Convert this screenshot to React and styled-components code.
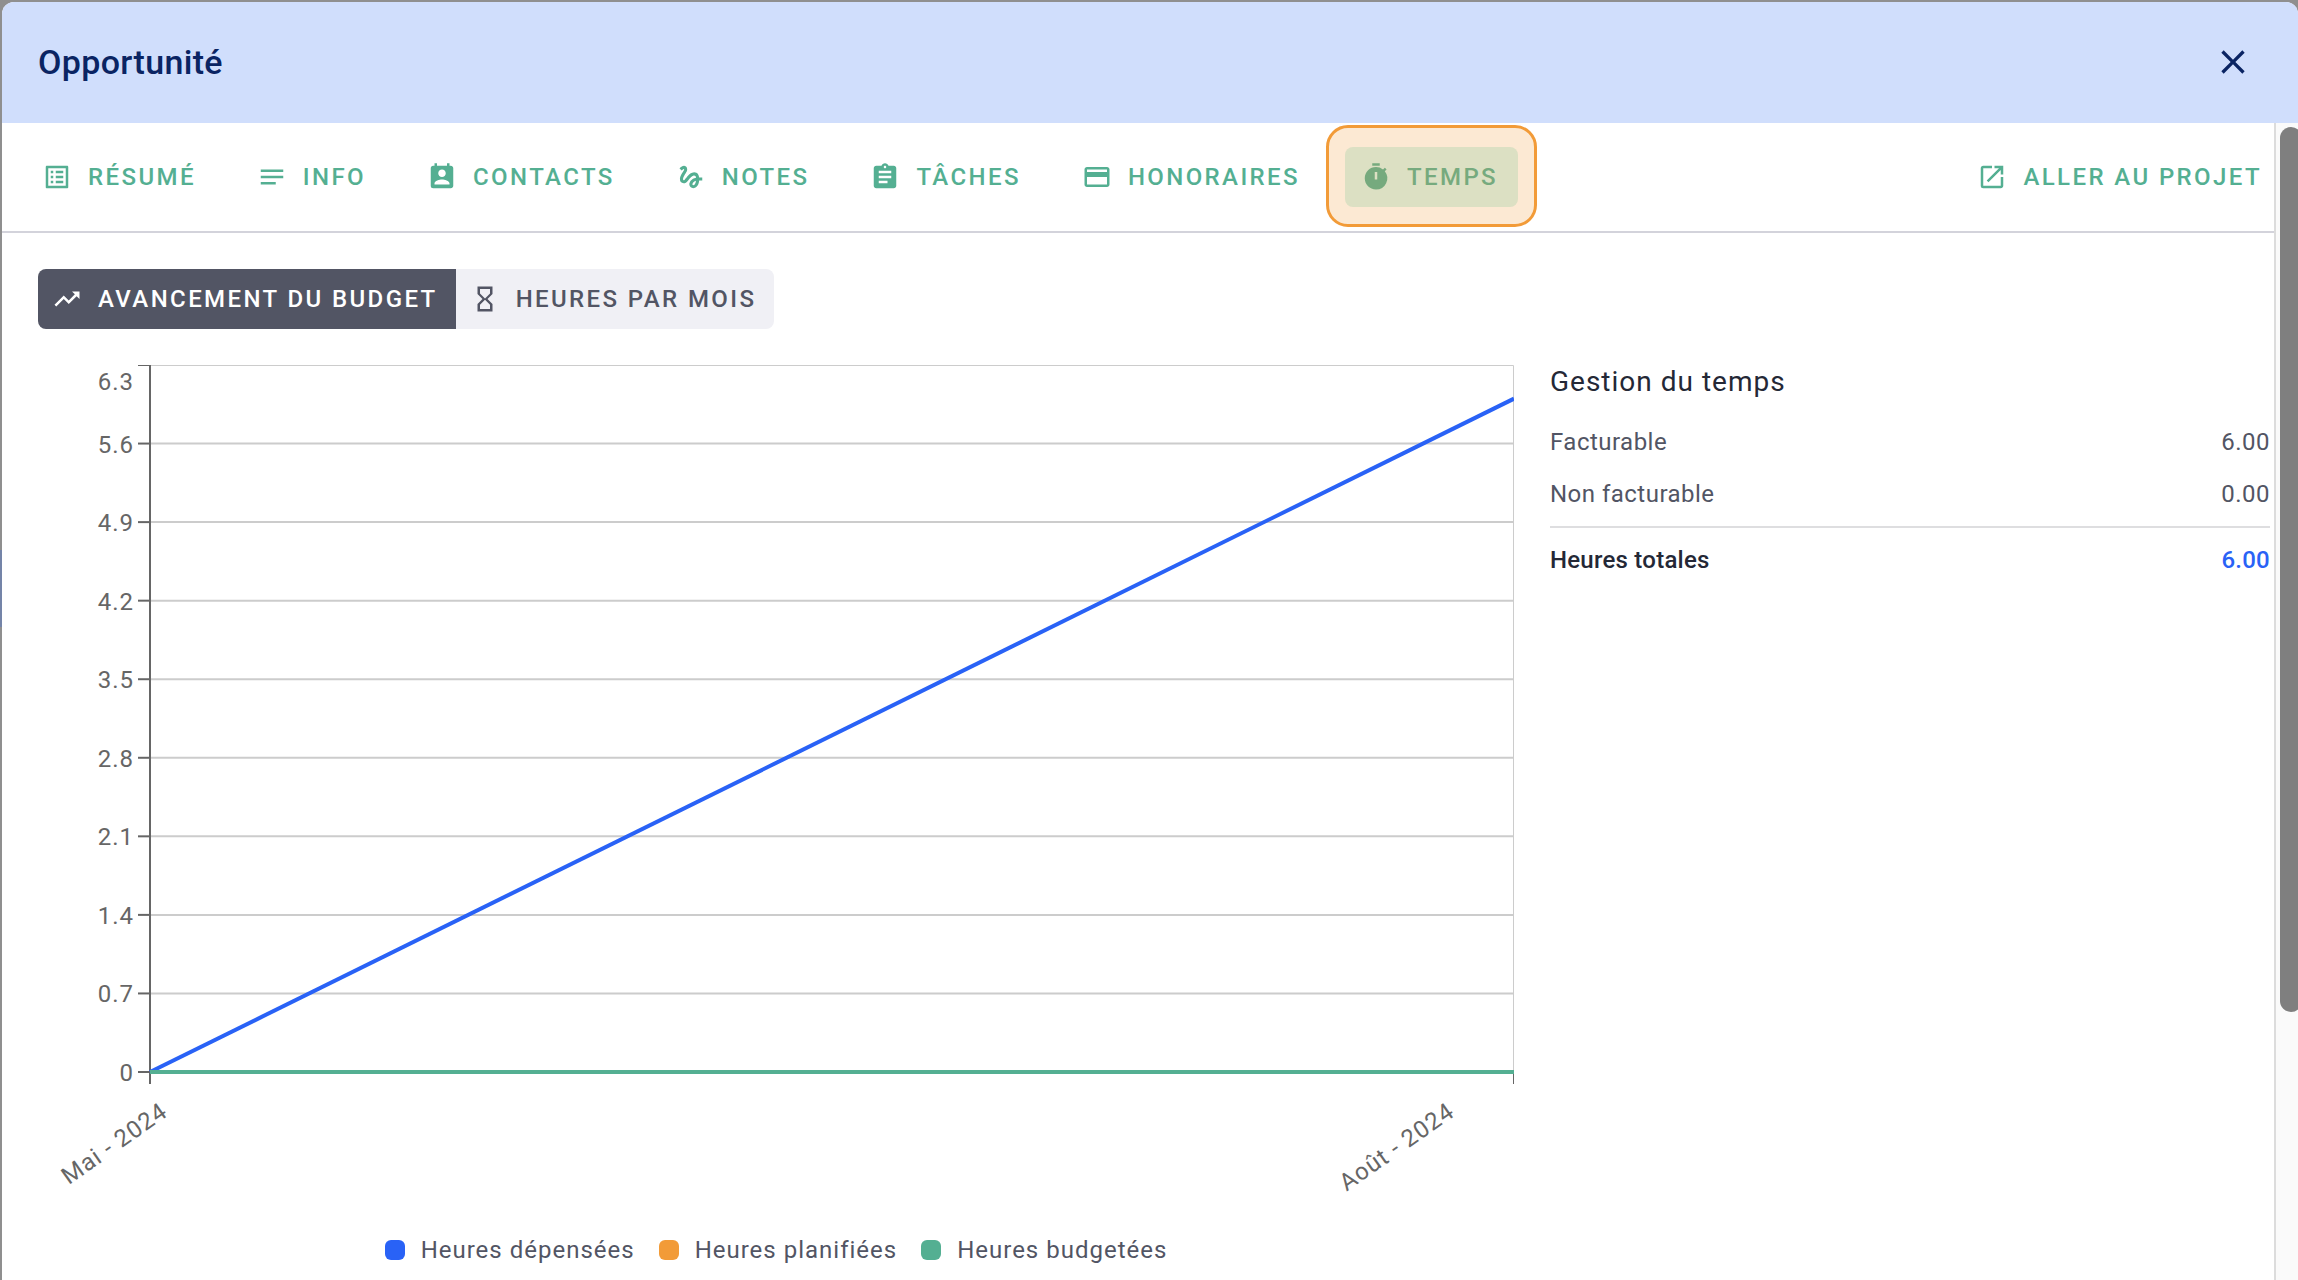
import React, { useState } from "react";
import styled, { createGlobalStyle } from "styled-components";
import {
  MdAssignment,
  MdClose,
  MdGesture,
  MdHourglassEmpty,
  MdListAlt,
  MdNotes,
  MdOpenInNew,
  MdPayment,
  MdPermContactCalendar,
  MdTimer,
  MdTrendingUp,
} from "react-icons/md";

const GlobalStyle = createGlobalStyle`
  :root {
    --colors-primary: #2962f6;
    --colors-green: #54af92;
    --colors-orange: #f29b38;
    --colors-slate: #525564;
    --colors-ink: #242836;
    --colors-navy: #0a2463;
    --colors-axis: #666;
    --colors-grid: #ccc;
    --fs-md: 24px;
    --fs-lg: 28px;
    --fs-xl: 34px;
  }

  * {
    box-sizing: border-box;
  }

  body {
    margin: 0;
    overflow: hidden;
    font-family: Roboto, "Liberation Sans", sans-serif;
    font-size: var(--fs-md);
    color: var(--colors-slate);
  }
`;

const Backdrop = styled.div`
  height: 100vh;
  padding: 2px 0 0 2px;
  background: linear-gradient(
    #8f8f8f 43%,
    #7484a8 43%,
    #7484a8 49%,
    #8f8f8f 49%
  );
`;

const Dialog = styled.section`
  display: flex;
  flex-direction: column;
  height: 100%;
  border-radius: 12px 12px 0 0;
  background-color: #fff;
  overflow: hidden;
`;

const Header = styled.header`
  display: flex;
  flex: none;
  align-items: center;
  justify-content: space-between;
  height: 121px;
  padding: 0 45px 2px 36px;
  background-color: #d0defc;
  color: var(--colors-navy);
`;

const Title = styled.h1`
  margin: 0;
  font-size: var(--fs-xl);
  font-weight: 500;
  letter-spacing: 0.01em;
`;

const CloseButton = styled.button`
  display: flex;
  padding: 0;
  border: 0;
  background: none;
  color: inherit;
  cursor: pointer;
`;

const Scroller = styled.div`
  display: flex;
  flex: 1;
  min-height: 0;
`;

const Content = styled.div`
  flex: 1;
  min-width: 0;
`;

const ScrollTrack = styled.div`
  flex: none;
  width: 24px;
  padding: 4px 0 0 4px;
  border-left: 2px solid #dcdcdc;
  background-color: #fafafa;
  overflow: hidden;
`;

const ScrollThumb = styled.div`
  width: 22px;
  height: 885px;
  border-radius: 11px;
  background-color: #7f7f7f;
`;

const TabBar = styled.nav`
  display: flex;
  align-items: center;
  gap: 25px;
  height: 110px;
  padding-left: 24px;
  border-bottom: 2px solid #d3d3db;
`;

const Tab = styled.button`
  position: relative;
  display: flex;
  align-items: center;
  gap: 16px;
  height: 60px;
  padding: 0 20px 0 16px;
  border: 0;
  border-radius: 8px;
  background-color: ${({ $active }) => ($active ? "#d7f4eb" : "transparent")};
  color: var(--colors-green);
  font: inherit;
  font-weight: 500;
  letter-spacing: 0.1em;
  text-transform: uppercase;
  text-decoration: none;
  white-space: nowrap;
  cursor: pointer;

  ${({ $active }) =>
    $active &&
    `
    &::after {
      content: "";
      position: absolute;
      inset: -22px -19px -20px;
      border: 3px solid #f29b38;
      border-radius: 22px;
      background-color: rgba(242, 155, 56, 0.22);
    }
  `}
`;

const ProjectLink = styled(Tab)`
  margin-left: auto;
  padding-right: 12px;
`;

const Body = styled.main`
  padding: 36px 4px 0 36px;
`;

const ToggleGroup = styled.div`
  display: inline-flex;
  border-radius: 8px;
  overflow: hidden;
`;

const Toggle = styled.button`
  display: flex;
  align-items: center;
  gap: 16px;
  height: 60px;
  padding: 0 18px 0 14px;
  border: 0;
  background-color: ${({ $active }) =>
    $active ? "var(--colors-slate)" : "#f0f0f5"};
  color: ${({ $active }) => ($active ? "#fff" : "var(--colors-slate)")};
  font: inherit;
  font-weight: 500;
  letter-spacing: 0.1em;
  text-transform: uppercase;
  white-space: nowrap;
  cursor: pointer;
`;

const Columns = styled.div`
  display: grid;
  grid-template-columns: 41fr 20fr;
  gap: 36px;
  padding-top: 32px;
`;

const ChartSvg = styled.svg`
  display: block;
  width: 100%;
  height: auto;
`;

const AxisText = styled.text`
  fill: var(--colors-axis);
  font-size: var(--fs-md);
  letter-spacing: 1px;
  text-anchor: end;
`;

const Legend = styled.ul`
  display: flex;
  justify-content: center;
  gap: 24px;
  margin: 0;
  padding: 0;
  list-style: none;
`;

const LegendItem = styled.li`
  display: flex;
  align-items: center;
  gap: 16px;
  line-height: 28px;
  letter-spacing: 1px;

  &::before {
    content: "";
    width: 20px;
    height: 20px;
    border-radius: 6px;
    background-color: ${({ $color }) => $color};
  }
`;

const Summary = styled.aside`
  padding-top: 5px;
`;

const SummaryTitle = styled.h2`
  margin: 0 0 18px;
  color: var(--colors-ink);
  font-size: var(--fs-lg);
  font-weight: 400;
  line-height: 32px;
  letter-spacing: 1px;
`;

const SummaryTable = styled.table`
  width: 100%;
  border-collapse: collapse;
  line-height: 28px;
  letter-spacing: 0.02em;

  th,
  td {
    padding: 12px 0;
    font-weight: 400;
    text-align: left;
  }

  td {
    text-align: right;
  }

  tbody tr:last-child > * {
    padding-bottom: 18px;
  }

  tfoot th,
  tfoot td {
    padding-top: 18px;
    border-top: 2px solid #dedee0;
    color: var(--colors-ink);
    font-weight: 500;
    letter-spacing: 0.01em;
  }

  tfoot td {
    color: var(--colors-primary);
  }
`;

const tabs = [
  { title: "Résumé", Icon: MdListAlt },
  { title: "Info", Icon: MdNotes },
  { title: "Contacts", Icon: MdPermContactCalendar },
  { title: "Notes", Icon: MdGesture },
  { title: "Tâches", Icon: MdAssignment },
  { title: "Honoraires", Icon: MdPayment },
  { title: "Temps", Icon: MdTimer },
];

const views = [
  { title: "Avancement du budget", Icon: MdTrendingUp },
  { title: "Heures par mois", Icon: MdHourglassEmpty },
];

const series = [
  { title: "Heures dépensées", color: "var(--colors-primary)", values: [0, 6] },
  { title: "Heures planifiées", color: "var(--colors-orange)", values: [0, 0] },
  { title: "Heures budgetées", color: "var(--colors-green)", values: [0, 0] },
];

const ticks = ["0", "0.7", "1.4", "2.1", "2.8", "3.5", "4.2", "4.9", "5.6", "6.3"];

const LEFT = 112;
const RIGHT = 1475;
const TOP = 4;
const BOTTOM = 711;

const scaleY = value => BOTTOM - (value / 6.3) * (BOTTOM - TOP);

const BudgetChart = () => (
  <ChartSvg viewBox="0 0 1476 875" role="img" aria-label="Avancement du budget">
    <g stroke="var(--colors-grid)" strokeWidth="2">
      {ticks.slice(1, -1).map(tick => (
        <line key={tick} x1={LEFT} x2={RIGHT} y1={scaleY(tick)} y2={scaleY(tick)} />
      ))}
      <path
        d={`M${LEFT} ${TOP + 0.5}H${RIGHT + 0.5}V${BOTTOM}`}
        fill="none"
        strokeWidth="1"
      />
    </g>
    <g stroke="var(--colors-axis)" strokeWidth="2">
      <line x1={LEFT} x2={LEFT} y1={TOP} y2={BOTTOM + 12} />
      <line
        x1={RIGHT + 0.5}
        x2={RIGHT + 0.5}
        y1={BOTTOM}
        y2={BOTTOM + 12}
        strokeWidth="1"
      />
      <line x1={LEFT - 12} x2={LEFT} y1={TOP + 0.5} y2={TOP + 0.5} strokeWidth="1" />
      {ticks.slice(0, -1).map(tick => (
        <line
          key={tick}
          x1={LEFT - 12}
          x2={LEFT}
          y1={scaleY(tick)}
          y2={scaleY(tick)}
        />
      ))}
    </g>
    {ticks.map(tick => (
      <AxisText key={tick} x={LEFT - 16} y={Math.max(scaleY(tick), 20) + 9}>
        {tick}
      </AxisText>
    ))}
    {series.map(({ title, color, values }) => (
      <line
        key={title}
        x1={LEFT}
        x2={RIGHT + 1}
        y1={scaleY(values[0])}
        y2={scaleY(values[1])}
        stroke={color}
        strokeWidth="4"
      />
    ))}
    <AxisText transform="translate(131 754) rotate(-35)">Mai - 2024</AxisText>
    <AxisText transform="translate(1418 754) rotate(-35)">Août - 2024</AxisText>
  </ChartSvg>
);

const App = () => {
  const [activeTab, setActiveTab] = useState("Temps");
  const [view, setView] = useState("Avancement du budget");

  return (
    <>
      <GlobalStyle />
      <Backdrop>
        <Dialog>
          <Header>
            <Title>Opportunité</Title>
            <CloseButton aria-label="Fermer">
              <MdClose size={40} />
            </CloseButton>
          </Header>
          <Scroller>
            <Content>
              <TabBar>
                {tabs.map(({ title, Icon }) => (
                  <Tab
                    key={title}
                    $active={title === activeTab}
                    onClick={() => setActiveTab(title)}
                  >
                    <Icon size={30} />
                    {title}
                  </Tab>
                ))}
                <ProjectLink as="a" href="#projet">
                  <MdOpenInNew size={30} />
                  Aller au projet
                </ProjectLink>
              </TabBar>
              <Body>
                <ToggleGroup>
                  {views.map(({ title, Icon }) => (
                    <Toggle
                      key={title}
                      $active={title === view}
                      onClick={() => setView(title)}
                    >
                      <Icon size={30} />
                      {title}
                    </Toggle>
                  ))}
                </ToggleGroup>
                <Columns>
                  <div>
                    <BudgetChart />
                    <Legend>
                      {series.map(({ title, color }) => (
                        <LegendItem key={title} $color={color}>
                          {title}
                        </LegendItem>
                      ))}
                    </Legend>
                  </div>
                  <Summary>
                    <SummaryTitle>Gestion du temps</SummaryTitle>
                    <SummaryTable>
                      <tbody>
                        <tr>
                          <th scope="row">Facturable</th>
                          <td>6.00</td>
                        </tr>
                        <tr>
                          <th scope="row">Non facturable</th>
                          <td>0.00</td>
                        </tr>
                      </tbody>
                      <tfoot>
                        <tr>
                          <th scope="row">Heures totales</th>
                          <td>6.00</td>
                        </tr>
                      </tfoot>
                    </SummaryTable>
                  </Summary>
                </Columns>
              </Body>
            </Content>
            <ScrollTrack>
              <ScrollThumb />
            </ScrollTrack>
          </Scroller>
        </Dialog>
      </Backdrop>
    </>
  );
};

export default App;
